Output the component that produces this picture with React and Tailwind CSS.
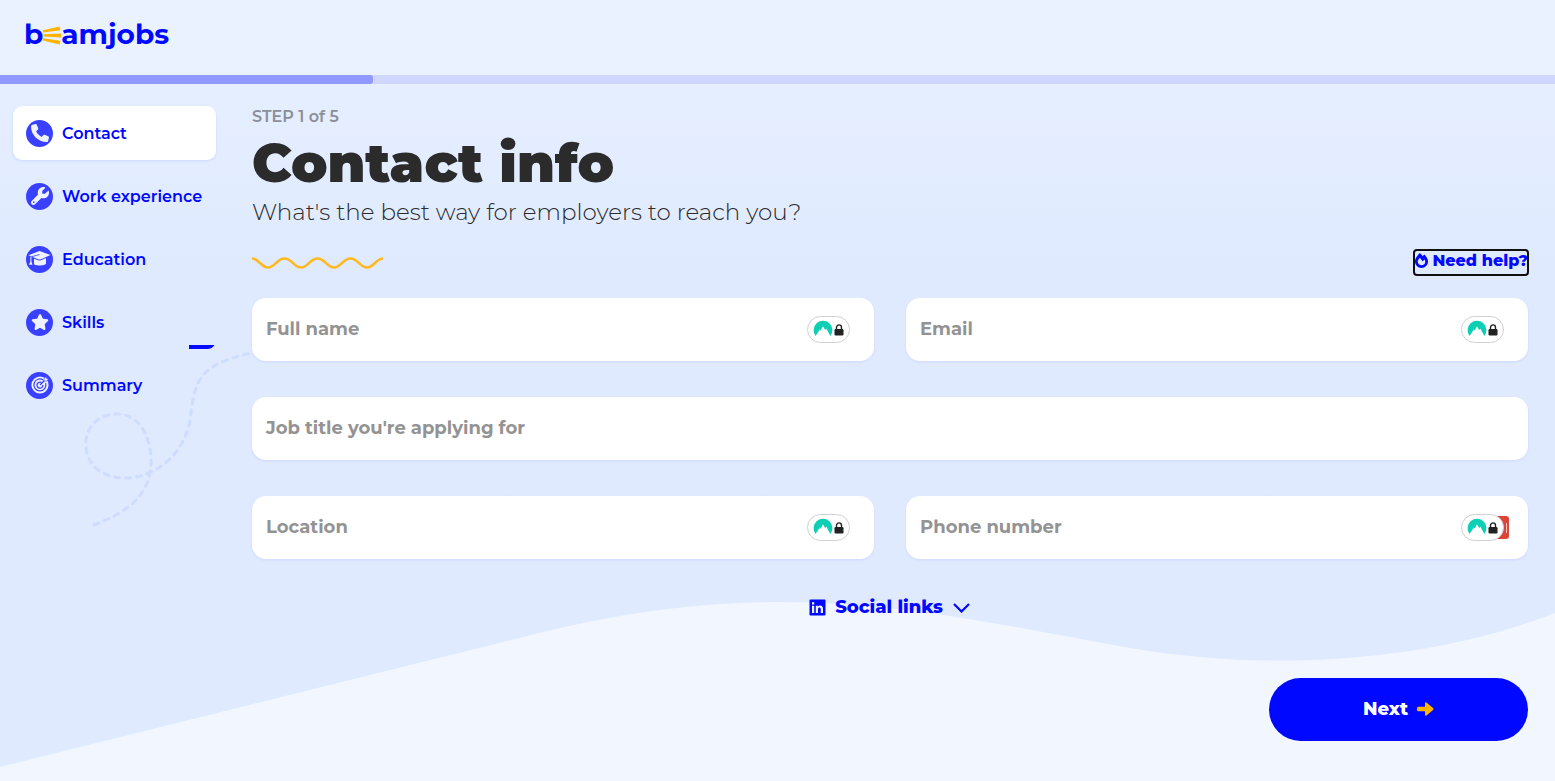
import { FaPhone, FaWrench, FaGraduationCap, FaStar } from 'react-icons/fa6'
import { FaFireAlt } from 'react-icons/fa'

const STEPS = [
  { icon: FaPhone,         title: 'Contact'         },
  { icon: FaWrench,        title: 'Work experience' },
  { icon: GradCapIcon,     title: 'Education'       },
  { icon: FaStar,          title: 'Skills'          },
  { icon: TargetIcon,      title: 'Summary'         },
]

const FIELDS = [
  { id: 'name',     label: 'Full name',                     badge: true },
  { id: 'email',    label: 'Email',                         badge: true },
  { id: 'jobTitle', label: "Job title you're applying for", wide: true  },
  { id: 'location', label: 'Location',                      badge: true },
  { id: 'phone',    label: 'Phone number',                  badge: true, flagged: true },
]

function GradCapIcon() {
  return (
    <svg width="23" height="18" viewBox="0 0 23 18" fill="#eef3ff" aria-hidden="true">
      <path d="M11.500 1L22.500 5L13 9.200Q11.500 9.600 10 9.200L.5 5.200z" />
      <path d="M6 8.800l4 1.500q1.500.4 3 0l5-2.300v5.500q0 1.800-6 1.900T6 13.800z" />
      <path d="M2.400 6.800h1v4.600l1 3.400H1l1.400-3.400z" />
      <path d="M3.500 6.700l8-2.100" fill="none" stroke="#3a40ff" strokeWidth=".8" />
    </svg>
  )
}

function TargetIcon({ size }) {
  return (
    <svg width={size} height={size} viewBox="0 0 18 18" fill="none" aria-hidden="true">
      <circle cx="9" cy="9" r="8.6" fill="#eef3ff" />
      <path d="M12.2 3.9A6 6 0 1 0 14.6 7" stroke="#3a40ff" strokeWidth="1.2" />
      <path d="M10.6 6.6A3 3 0 1 0 12 9" stroke="#3a40ff" strokeWidth="1.3" />
      <path d="M9 9l5-5" stroke="#3a40ff" strokeWidth="1.3" />
      <path d="M13 5V2.5L15.2.6l.5 1.8 1.9.5-2 2.3z" fill="#eef3ff" stroke="#3a40ff" strokeWidth=".6" />
    </svg>
  )
}

function Logo() {
  return (
    <a href="#home" aria-label="beamjobs" className="flex items-center text-[28px] leading-9 font-bold text-[#0008ff]">
      <span>b</span>
      <svg width="18" height="19" viewBox="0 0 18 19" className="mt-1" fill="#ffb400" aria-hidden="true">
        <path d="M0 4.2L16.6.6l.8 3.7L0 6.6z" />
        <path d="M.6 8.2L18 7.6v3.8L.6 10.6z" />
        <path d="M0 12.2l17.4 2.6-.8 3.8L0 14.6z" />
      </svg>
      <span>amjobs</span>
    </a>
  )
}

function VpnBadge({ flagged }) {
  return (
    <span className="absolute right-6 top-[18px] flex">
      {flagged && (
        <span className="absolute -right-[5px] top-[2px] flex h-[23px] w-5 items-center justify-end rounded-[3px] bg-[#db4437] pr-[2px]">
          <span className="h-[10px] w-px bg-white/70" />
        </span>
      )}
      <span className="relative flex h-[27px] w-[43px] items-center justify-center gap-px rounded-full border border-[#d0d0d0] bg-white pr-px">
        <svg width="20" height="18" viewBox="0 0 20 18" className="-mt-1" aria-hidden="true">
          <path d="M2.6 17A9.4 9.4 0 1 1 17.4 17L13.2 9.6l-1 1.7L10 7.2 7.9 11l.5 1-1.6-1.6z" fill="#0ccfb4" />
        </svg>
        <svg width="10" height="12" viewBox="0 0 10 12" aria-hidden="true">
          <rect x=".5" y="5" width="9" height="6.500" rx="1.2" fill="#222" />
          <path d="M2.500 5.500V3.400a2.500 2.500 0 0 1 5 0v2.100" fill="none" stroke="#222" strokeWidth="1.400" />
        </svg>
      </span>
    </span>
  )
}

function Field({ id, label, wide, badge, flagged }) {
  return (
    <div className={wide ? 'relative col-span-2' : 'relative'}>
      <input
        id={id}
        placeholder=" "
        className="peer block h-[63px] w-full rounded-[14px] bg-white px-[14px] text-[18px] font-semibold text-[#2b2b2b]
                   shadow-[0_1px_3px_rgba(0,8,255,0.08)] outline-none"
      />
      {/* Label sits in the box until something is typed */}
      <label
        htmlFor={id}
        className="absolute left-[14px] top-[19px] text-[18px] leading-6 font-bold text-[#939393] peer-not-placeholder-shown:hidden"
      >
        {label}
      </label>
      {badge && <VpnBadge flagged={flagged} />}
    </div>
  )
}

export default function App() {
  return (
    <div className="relative isolate flex min-h-screen flex-col bg-linear-to-b from-[#e7f1ff] via-[#e0eaff] via-35% to-[#dfeaff] font-['Montserrat','Inter',sans-serif] text-[#2b2b2b]">
      {/* Wave behind the form */}
      <svg className="absolute bottom-0 left-0 -z-10 h-[180px] w-full" viewBox="0 0 1555 180" preserveAspectRatio="none" aria-hidden="true">
        <path d="M0 166L535 33C630 9 710 1 780 1C870 1 940 13 1010 25L1130 47C1270 71 1430 61 1555 12V180H0z" fill="#f1f6ff" />
      </svg>

      <header className="flex h-[75px] items-center bg-[#eaf1ff] px-6 pb-2">
        <Logo />
      </header>
      <div role="progressbar" aria-label="Progress" aria-valuenow={24} className="h-[9px] bg-[#d0d7ff]">
        <div className="h-full w-[24%] rounded-r-[3px] bg-[#9099ff]" />
      </div>

      <main className="relative flex flex-1 gap-9 pt-[22px] pr-[27px] pb-10 pl-[13px]">
        {/* Paper plane trail */}
        <svg className="absolute left-20 top-64 -z-10" width="180" height="190" viewBox="80 340 180 190" fill="none" aria-hidden="true">
          <path
            d="M94 525C130 511 153 493 151 456C149 432 137 414 117 414C98 414 84 428 86 447C88 469 106 479 130 478C160 474 187 452 191 413C195 376 204 364 251 353"
            stroke="#cddcff" strokeWidth="3" strokeLinecap="round" strokeDasharray="5 6"
          />
          <path d="M189 345h25.500q-2.500 4-7 4H189z" fill="#0008ff" />
        </svg>

        <nav className="flex w-[203px] shrink-0 flex-col gap-[9px]">
          {STEPS.map(({ icon: Icon, title }, i) => (
            <a
              key={title}
              href={`#step-${i + 1}`}
              className={`flex h-[54px] items-center gap-[9px] rounded-[9px] pl-[13px] text-[16px] font-semibold whitespace-nowrap text-[#0008ff] ${
                i === 0 ? 'bg-white shadow-[0_1px_3px_rgba(0,8,255,0.1)]' : ''
              }`}
            >
              <span className="flex size-[27px] items-center justify-center rounded-full bg-[#3a40ff] text-[#eef3ff]">
                <Icon size={18} />
              </span>
              <span className="pt-px">{title}</span>
            </a>
          ))}
        </nav>

        <div className="flex min-w-0 flex-1 flex-col">
          <p className="text-[16px] leading-[22px] font-semibold text-[#8b8f96]">STEP 1 of 5</p>
          <h1 className="text-[54px] leading-[70px] font-black">Contact info</h1>
          <p className="text-[23px] leading-7 font-light">What's the best way for employers to reach you?</p>

          <div className="mt-[23px] mb-[22px] flex h-[27px] items-center justify-between">
            <svg width="131" height="12" viewBox="0 0 131 12" fill="none" aria-hidden="true">
              <path
                d="M0 1.500C7 1.500 9 10.500 16 10.500S25 1.500 32.500 1.500S42 10.500 49 10.500S58 1.500 65.500 1.500S75 10.500 82 10.500S91 1.500 98.500 1.500S108 10.500 115 10.500S124 1.500 131 1.500"
                stroke="#ffb91d" strokeWidth="2.500"
              />
            </svg>
            <button className="flex h-[25px] items-center gap-[3px] rounded-[3px] pb-1 text-[16px] font-extrabold text-[#0008ff] outline-2 -outline-offset-1 outline-[#101010]">
              <FaFireAlt size={15} />
              Need help?
            </button>
          </div>

          <form className="grid grid-cols-2 gap-x-8 gap-y-9">
            {FIELDS.map((field) => (
              <Field key={field.id} {...field} />
            ))}
          </form>

          <button className="mt-9 flex h-6 items-center gap-[9px] self-center text-[18px] font-extrabold text-[#0008ff]">
            <svg width="17" height="17" viewBox="0 0 17 17" aria-hidden="true">
              <rect x=".5" y=".5" width="16" height="16" rx="1" fill="#0008ff" />
              <path d="M3 6.800h2.200V14H3zM3 3.200h2.200v2.200H3zM6.800 6.800h2v1c1.300-2 5.200-1.600 5.200 2V14h-2.200v-3.800c0-2.200-2.800-2-2.800 0V14H6.800z" fill="#f1f6ff" />
            </svg>
            <span className="pt-px">Social links</span>
            <svg width="19" height="10" viewBox="0 0 19 10" fill="none" className="mt-px" aria-hidden="true">
              <path d="M2 1l7.500 7.500L17 1" stroke="#0008ff" strokeWidth="2.200" />
            </svg>
          </button>

          <button className="mt-[59px] flex h-[63px] w-[259px] items-center justify-center gap-[9px] self-end rounded-full bg-[#0008ff] text-[18px] font-extrabold text-white">
            Next
            <svg width="17" height="14" viewBox="0 0 17 14" className="-mt-[2px]" aria-hidden="true">
              <path d="M1.500 4.800H8V1.200Q8.400-.3 9.800.7L16 6Q17 7 16 8L9.800 13.300Q8.400 14.300 8 12.800V9.200H1.500Q0 9.200 0 7.700V6.300Q0 4.800 1.500 4.800z" fill="#ffb400" />
            </svg>
          </button>
        </div>
      </main>
    </div>
  )
}
